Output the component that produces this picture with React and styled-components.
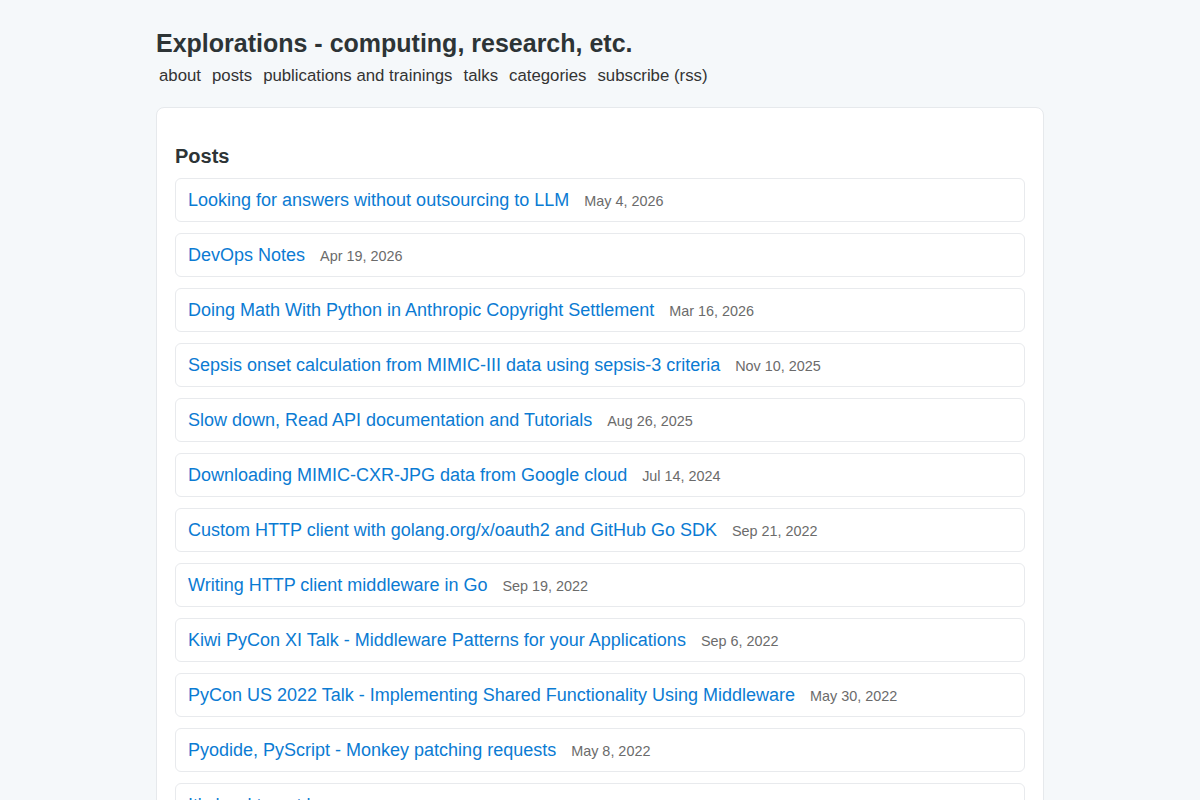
import React from 'react';
import styled, { createGlobalStyle } from 'styled-components';

const GlobalStyle = createGlobalStyle`
  body {
    margin: 0;
    background: #f5f8fa;
    font-family: "Liberation Sans", Arial, sans-serif;
    color: #333;
  }
`;

const Page = styled.div`
  width: 888px;
  margin: 0 auto;
  padding-top: 27px;
`;

const SiteTitle = styled.h1`
  font-size: 25px;
  font-weight: bold;
  color: #2d3436;
  margin: 0;
  line-height: 32px;
`;

const Nav = styled.nav`
  display: flex;
  gap: 11px;
  margin-top: 5px;
  padding-left: 3px;

  a {
    font-size: 16.8px;
    line-height: 24px;
    color: #333;
    text-decoration: none;
  }
`;

const Card = styled.section`
  margin-top: 19px;
  background: #fff;
  border: 1px solid #e6e9ec;
  border-radius: 8px;
  padding: 35px 18px 18px;
`;

const Heading = styled.h2`
  font-size: 20px;
  font-weight: bold;
  color: #2d3436;
  margin: 0 0 9px;
  line-height: 26px;
`;

const PostList = styled.ul`
  list-style: none;
  margin: 0;
  padding: 0;
  display: flex;
  flex-direction: column;
  gap: 11px;
`;

const PostItem = styled.li`
  border: 1px solid #e8eaed;
  border-radius: 6px;
  padding: 9px 12px;
  display: flex;
  align-items: baseline;
`;

const PostLink = styled.a`
  font-size: 18px;
  line-height: 24px;
  color: #0b7bd3;
  text-decoration: none;
`;

const PostDate = styled.span`
  font-size: 14.4px;
  line-height: 16px;
  color: #6b6b6b;
  margin-left: 15px;
`;

const posts = [
  { title: 'Looking for answers without outsourcing to LLM', date: 'May 4, 2026' },
  { title: 'DevOps Notes', date: 'Apr 19, 2026' },
  { title: 'Doing Math With Python in Anthropic Copyright Settlement', date: 'Mar 16, 2026' },
  { title: 'Sepsis onset calculation from MIMIC-III data using sepsis-3 criteria', date: 'Nov 10, 2025' },
  { title: 'Slow down, Read API documentation and Tutorials', date: 'Aug 26, 2025' },
  { title: 'Downloading MIMIC-CXR-JPG data from Google cloud', date: 'Jul 14, 2024' },
  { title: 'Custom HTTP client with golang.org/x/oauth2 and GitHub Go SDK', date: 'Sep 21, 2022' },
  { title: 'Writing HTTP client middleware in Go', date: 'Sep 19, 2022' },
  { title: 'Kiwi PyCon XI Talk - Middleware Patterns for your Applications', date: 'Sep 6, 2022' },
  { title: 'PyCon US 2022 Talk - Implementing Shared Functionality Using Middleware', date: 'May 30, 2022' },
  { title: 'Pyodide, PyScript - Monkey patching requests', date: 'May 8, 2022' },
  { title: "It's hard to get by as a newcomer", date: 'Apr 2, 2022' },
];

const links = ['about', 'posts', 'publications and trainings', 'talks', 'categories', 'subscribe (rss)'];

export default function App() {
  return (
    <>
      <GlobalStyle />
      <Page>
        <SiteTitle>Explorations - computing, research, etc.</SiteTitle>
        <Nav>
          {links.map((l) => (
            <a key={l} href="#">{l}</a>
          ))}
        </Nav>
        <Card>
          <Heading>Posts</Heading>
          <PostList>
            {posts.map((p, i) => (
              <PostItem key={i}>
                <PostLink href="#">{p.title}</PostLink>
                <PostDate>{p.date}</PostDate>
              </PostItem>
            ))}
          </PostList>
        </Card>
      </Page>
    </>
  );
}
